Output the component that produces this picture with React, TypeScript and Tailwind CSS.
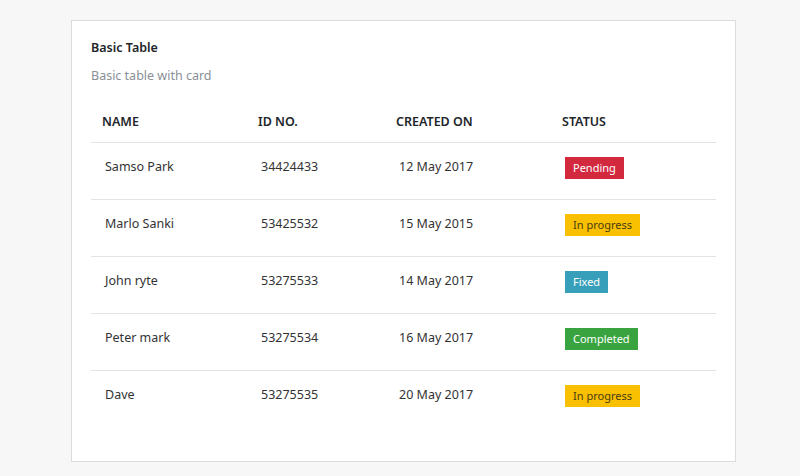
import React from "react";

type Row = {
  name: string;
  id: string;
  created: string;
  status: "Pending" | "In progress" | "Fixed" | "Completed";
};

const rows: Row[] = [
  { name: "Samso Park", id: "34424433", created: "12 May 2017", status: "Pending" },
  { name: "Marlo Sanki", id: "53425532", created: "15 May 2015", status: "In progress" },
  { name: "John ryte", id: "53275533", created: "14 May 2017", status: "Fixed" },
  { name: "Peter mark", id: "53275534", created: "16 May 2017", status: "Completed" },
  { name: "Dave", id: "53275535", created: "20 May 2017", status: "In progress" },
];

const badgeClass: Record<Row["status"], string> = {
  Pending: "bg-[#d3293f] text-white",
  "In progress": "bg-[#f9c002] text-[#4a3c12]",
  Fixed: "bg-[#379fb9] text-white",
  Completed: "bg-[#39a43f] text-white",
};

const cols = "grid grid-cols-[156px_138px_166px_165px]";

const App: React.FC = () => {
  return (
    <div
      className="min-h-screen bg-[#f7f7f7] pt-5 pl-[71px]"
      style={{ fontFamily: '"Noto Sans", "Open Sans", Arial, sans-serif' }}
    >
      <div className="w-[665px] h-[442px] bg-white border border-[#dcdcdc] pl-[19px] pr-5 pt-[17px]">
        <h4 className="text-[12.5px] leading-5 font-semibold text-[#212529]">Basic Table</h4>
        <p className="mt-2 text-[12.5px] leading-5 text-[#8a8f96]">Basic table with card</p>

        <div className="mt-[14px] w-[625px]">
          <div className={`${cols} h-[42px] pt-[2px] items-center text-[12.5px] font-semibold text-[#212529]`}>
            <div className="pl-[11px]">NAME</div>
            <div className="pl-[11px]">ID NO.</div>
            <div className="pl-[11px]">CREATED ON</div>
            <div className="pl-[11px]">STATUS</div>
          </div>

          {rows.map((r) => (
            <div
              key={r.id}
              className={`${cols} h-[57px] border-t border-[#e3e3e3] pt-[14px] text-[12.5px] leading-5 text-[#333]`}
            >
              <div className="pl-[14px]">{r.name}</div>
              <div className="pl-[14px]">{r.id}</div>
              <div className="pl-[14px]">{r.created}</div>
              <div className="pl-[14px]">
                <span
                  className={`inline-flex h-[22px] items-center px-2 text-[11px] ${badgeClass[r.status]}`}
                >
                  {r.status}
                </span>
              </div>
            </div>
          ))}
        </div>
      </div>
    </div>
  );
};

export default App;
